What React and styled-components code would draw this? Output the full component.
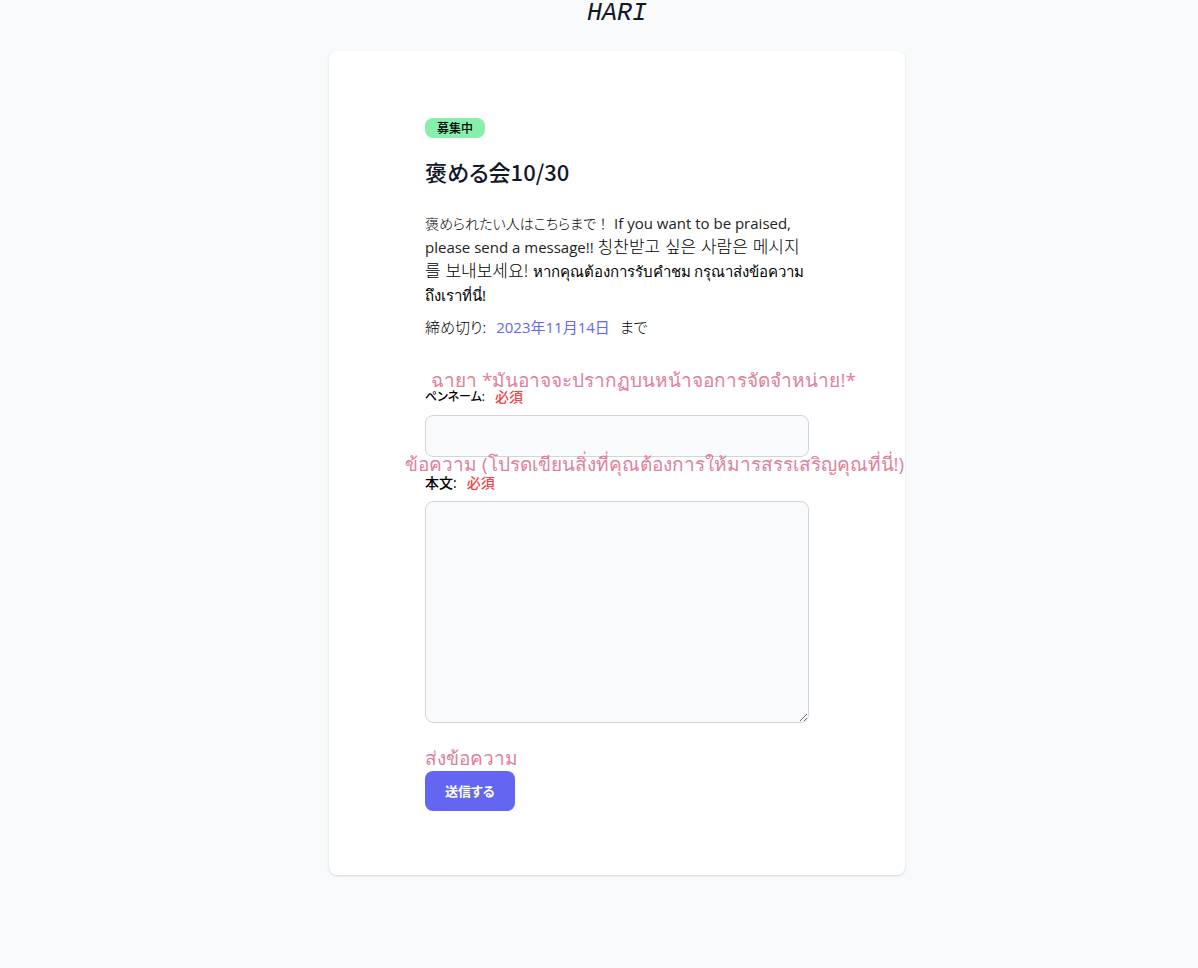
import React from "react"
import styled, { createGlobalStyle } from "styled-components"

const GlobalStyle = createGlobalStyle`
  *, *::before, *::after {
    box-sizing: border-box;
  }

  body {
    margin: 0;
    background: #f9fafb;
    color: #111827;
    font-family: "Open Sans", "Noto Sans CJK JP", sans-serif;
    font-size: 15px;
    line-height: 24px;
  }
`

const Page = styled.main`
  min-height: 100vh;
  padding: 0 0 64px 36px;
  display: flex;
  flex-direction: column;
  align-items: center;
`

const Logo = styled.a`
  margin-bottom: 23px;
  color: #111827;
  font-family: "Liberation Mono", monospace;
  font-size: 25px;
  font-style: italic;
  line-height: 28px;
  text-decoration: none;
`

const Card = styled.section`
  width: 100%;
  max-width: 576px;
  padding: 64px 96px;
  border-radius: 8px;
  background: #ffffff;
  box-shadow: 0 1px 3px rgba(0, 0, 0, 0.1), 0 1px 2px rgba(0, 0, 0, 0.06);
`

const StatusRow = styled.div`
  height: 26px;
  margin-bottom: 16px;
  display: flex;
  align-items: center;
`

const Status = styled.span`
  padding: 0 12px;
  border-radius: 8px;
  background: #86efac;
  color: #000000;
  font-family: "Noto Sans CJK JP", sans-serif;
  font-size: 12px;
  font-weight: 500;
  line-height: 20px;
`

const Title = styled.h1`
  margin: 0 0 26px;
  font-family: "Noto Sans CJK JP", sans-serif;
  font-feature-settings: "palt";
  font-size: 22px;
  font-weight: 500;
  line-height: 28px;
`

const Description = styled.p`
  margin: 0 0 8px;
  color: #222222;
  white-space: nowrap;
`

const Japanese = styled.span`
  color: #000000;
  font-family: "Noto Sans CJK JP", sans-serif;
  font-feature-settings: "palt";
  font-size: 14px;
  font-weight: 300;
  line-height: 20px;
`

const FullWidth = styled.span`
  font-feature-settings: normal;
`

const Korean = styled.span`
  color: #000000;
  font-family: "Noto Sans CJK KR", sans-serif;
  font-size: 17px;
  font-weight: 300;
  line-height: 20px;
`

const Thai = styled.span`
  color: #000000;
`

const Deadline = styled.p`
  margin: 0 0 48px;
  display: flex;
  align-items: baseline;
  gap: 10px;
`

const DeadlineLabel = styled(Japanese)`
  font-size: 15px;
`

const DeadlineDate = styled.time`
  color: #6366f1;
`

const Field = styled.div`
  position: relative;
  margin-bottom: ${props => props.$gap};
`

const Label = styled.label`
  margin-bottom: 8px;
  display: flex;
  gap: 10px;
  color: #000000;
  font-family: "Open Sans", "Noto Sans CJK JP", sans-serif;
  font-feature-settings: "palt";
  font-size: ${props => props.$size};
  font-weight: 500;
  line-height: 20px;
`

const Required = styled.span`
  color: #ef4444;
  font-size: 14px;
`

const Input = styled.input`
  display: block;
  width: 100%;
  height: 42px;
  padding: 10px;
  border: 1px solid #d1d5db;
  border-radius: 8px;
  background: #f9fafb;
  font: inherit;
`

const Textarea = styled.textarea`
  display: block;
  width: 100%;
  height: 222px;
  padding: 10px;
  border: 1px solid #d1d5db;
  border-radius: 8px;
  background: #f9fafb;
  font: inherit;
  resize: vertical;
`

const Actions = styled.div`
  position: relative;
`

// Thai notes float over the form
const Note = styled.span`
  position: absolute;
  z-index: 1;
  top: ${props => props.$top};
  left: ${props => props.$left};
  color: #e07f9a;
  font-size: 19px;
  line-height: 24px;
  white-space: nowrap;
  pointer-events: none;
`

const Submit = styled.button`
  display: block;
  height: 40px;
  padding: 0 20px;
  border: 0;
  border-radius: 8px;
  background: #6366f1;
  color: #ffffff;
  font-family: "Noto Sans CJK JP", sans-serif;
  font-feature-settings: "palt";
  font-size: 13px;
  font-weight: 700;
  line-height: 20px;
`

const App = () => (
  <>
    <GlobalStyle />
    <Page>
      <Logo href="/">HARI</Logo>
      <Card>
        <StatusRow>
          <Status>募集中</Status>
        </StatusRow>
        <Title>褒める会10/30</Title>
        <Description>
          <Japanese lang="ja">
            褒められたい人はこちらまで<FullWidth>！</FullWidth>
          </Japanese>{" "}
          If you want to be praised,
          <br />
          please send a message!!{" "}
          <Korean lang="ko">칭찬받고 싶은 사람은 메시지</Korean>
          <br />
          <Korean lang="ko">를 보내보세요!</Korean>{" "}
          <Thai lang="th">หากคุณต้องการรับคำชม กรุณาส่งข้อความ</Thai>
          <br />
          <Thai lang="th">ถึงเราที่นี่!</Thai>
        </Description>
        <Deadline>
          <DeadlineLabel>締め切り:</DeadlineLabel>
          <DeadlineDate dateTime="2023-11-14">2023年11月14日</DeadlineDate>
          <DeadlineLabel>まで</DeadlineLabel>
        </Deadline>
        <form onSubmit={e => e.preventDefault()}>
          <Field $gap="16px">
            <Note lang="th" $top="-19px" $left="6px">
              ฉายา *มันอาจจะปรากฏบนหน้าจอการจัดจำหน่าย!*
            </Note>
            <Label htmlFor="penname" $size="12px">
              ペンネーム: <Required>必須</Required>
            </Label>
            <Input id="penname" type="text" required />
          </Field>
          <Field $gap="48px">
            <Note lang="th" $top="-21px" $left="-20px">
              ข้อความ (โปรดเขียนสิ่งที่คุณต้องการให้มารสรรเสริญคุณที่นี่!)
            </Note>
            <Label htmlFor="body" $size="14px">
              本文: <Required>必須</Required>
            </Label>
            <Textarea id="body" required />
          </Field>
          <Actions>
            <Note lang="th" $top="-25px" $left="0">
              ส่งข้อความ
            </Note>
            <Submit type="submit">送信する</Submit>
          </Actions>
        </form>
      </Card>
    </Page>
  </>
)

export default App
